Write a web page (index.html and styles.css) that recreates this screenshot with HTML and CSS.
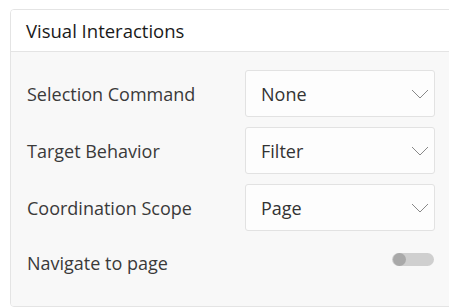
FILE: index.html
```html
<!DOCTYPE html>
<html lang="en">
<head>
    <meta charset="UTF-8">
    <meta name="viewport" content="width=device-width, initial-scale=1.0">
    <title>Visual Interactions</title>
    <link rel="stylesheet" href="styles.css">
</head>
<body>

<div class="card">
    <header class="card-header">
        <h2>Visual Interactions</h2>
    </header>

    <div class="card-body">
        <div class="row">
            <label class="label">Selection Command</label>
            <div class="select">
                <span>None</span>
                <svg class="chevron" width="18" height="10" viewBox="0 0 18 10"><path d="M1 1 L9 9 L17 1" fill="none" stroke="#888" stroke-width="1"/></svg>
            </div>
        </div>
        <div class="row">
            <label class="label">Target Behavior</label>
            <div class="select">
                <span>Filter</span>
                <svg class="chevron" width="18" height="10" viewBox="0 0 18 10"><path d="M1 1 L9 9 L17 1" fill="none" stroke="#888" stroke-width="1"/></svg>
            </div>
        </div>
        <div class="row">
            <label class="label">Coordination Scope</label>
            <div class="select">
                <span>Page</span>
                <svg class="chevron" width="18" height="10" viewBox="0 0 18 10"><path d="M1 1 L9 9 L17 1" fill="none" stroke="#888" stroke-width="1"/></svg>
            </div>
        </div>
        <div class="row row-toggle">
            <label class="label">Navigate to page</label>
            <div class="toggle"><span class="knob"></span></div>
        </div>
    </div>
</div>

</body>
</html>
```

FILE: styles.css
```css
/* Basic reset */
* {
    margin: 0;
    padding: 0;
    box-sizing: border-box;
}

body {
    font-family: "Open Sans", "Liberation Sans", sans-serif;
    background-color: #fff;
    color: #333;
    overflow: hidden;
}

.card {
    margin: 9px 0 0 10px;
    width: 460px;
    border: 1px solid #e4e4e4;
    border-radius: 4px;
    overflow: hidden;
}

.card-header {
    height: 42px;
    padding: 0 15px;
    display: flex;
    align-items: center;
    background-color: #fff;
    border-bottom: 1px solid #e4e4e4;
}

.card-header h2 {
    font-size: 18.5px;
    font-weight: 500;
    color: #1a1a1a;
}

.card-body {
    background-color: #f8f8f8;
    padding: 18px 0 21px 16px;
    display: flex;
    flex-direction: column;
    gap: 10px;
}

.row {
    display: flex;
    align-items: center;
    height: 47px;
}

.label {
    width: 218px;
    font-size: 18px;
    color: #3a3a3a;
}

.select {
    width: 190px;
    height: 47px;
    display: flex;
    align-items: center;
    justify-content: space-between;
    padding: 0 5px 0 15px;
    background-color: #fdfdfd;
    border: 1px solid #e2e2e2;
    border-radius: 3px;
    font-size: 18px;
    color: #333;
}

.row-toggle {
    height: 44px;
}

.toggle {
    margin-left: 147px;
    margin-top: -7px;
    width: 42px;
    height: 13px;
    border-radius: 7px;
    background-color: #cfcfcf;
    position: relative;
}

.knob {
    position: absolute;
    left: 1px;
    top: 0;
    width: 13px;
    height: 13px;
    border-radius: 50%;
    background-color: #a9a9a9;
}
```
